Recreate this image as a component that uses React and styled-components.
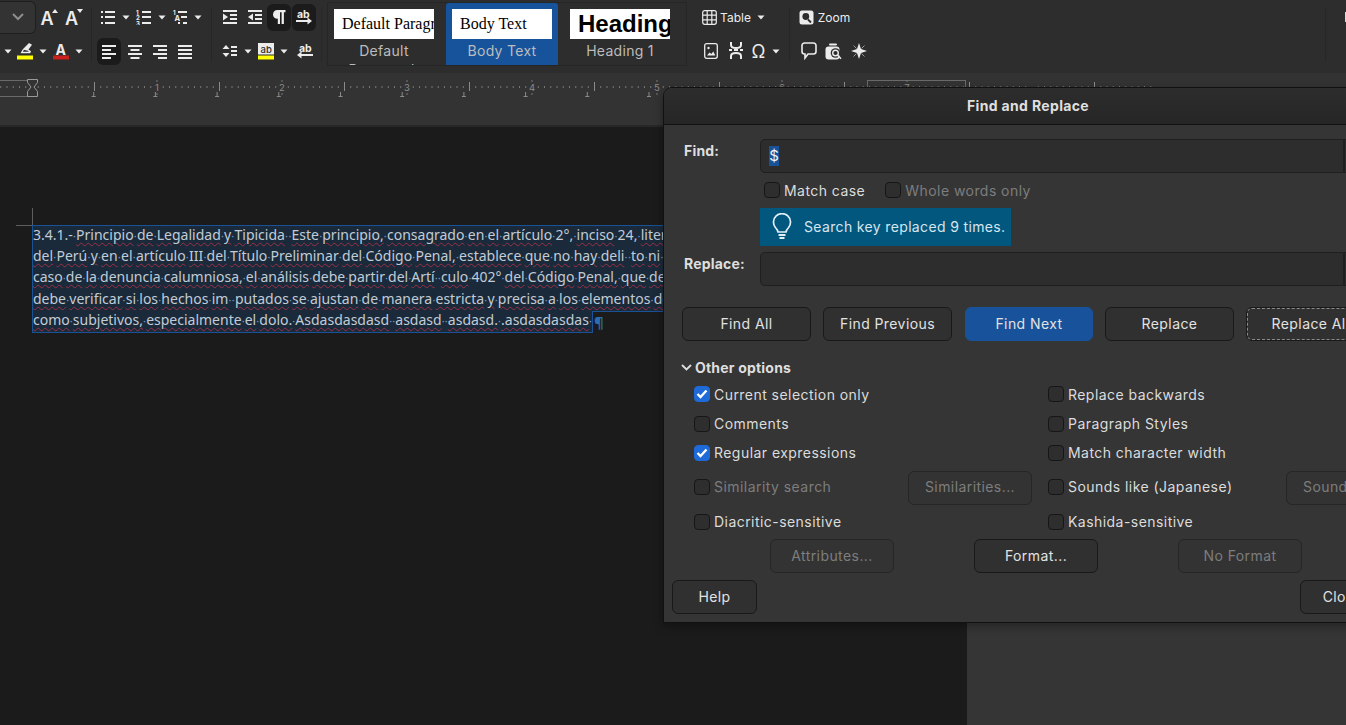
import React from 'react';
import styled, { createGlobalStyle } from 'styled-components';

const Global = createGlobalStyle`
  html, body { margin: 0; padding: 0; background: #1b1b1b; overflow: hidden; }
  * { box-sizing: border-box; }
`;

const Screen = styled.div`
  position: relative; width: 1346px; height: 725px; overflow: hidden;
  display: flex; flex-direction: column;
  font-family: Inter, "Liberation Sans", sans-serif; font-size: 14px; color: #e4e4e4;
`;

/* ---------- toolbar ---------- */
const Toolbar = styled.div`
  flex: 0 0 73px; display: flex; background: #2d2d2d; padding-bottom: 5px;
`;
const Section = styled.div`
  flex: 0 0 ${p => p.$w}px; display: flex; flex-direction: column; margin-left: ${p => p.$ml || 0}px;
  position: relative; height: 68px;
  &::after { content: ""; position: absolute; right: 0; top: 8px; bottom: 6px; width: 1px; background: #272727; }
`;
const ToolRow = styled.div`
  flex: 0 0 34px; display: flex; align-items: center; padding-left: ${p => p.$pad || 0}px;
`;
const Tool = styled.div`
  flex: 0 0 ${p => (p.$on ? p.$w - 1 : p.$w)}px; height: 27px; display: flex; align-items: center; justify-content: center;
  margin-right: ${p => (p.$on ? 1 : 0)}px;
  border-radius: 6px; color: #ececec; font-size: 12px;
  background: ${p => (p.$on ? '#1b1b1b' : 'transparent')};
`;
const Combo = styled.div`
  flex: 0 0 36px; height: 33px; display: flex; align-items: center; justify-content: center;
  background: #333; border: 1px solid #1f1f1f; border-left: none; border-radius: 0 6px 6px 0; color: #8d8d8d;
`;
const Glyph = styled.svg`
  display: block; fill: currentColor; flex: none;
  text { font-family: Inter, sans-serif; }
`;
const Arrow = () => (
  <Glyph width="8" height="5" viewBox="0 0 8 5"><path d="M0.5 0.5h7L4 4.5z" /></Glyph>
);
const Ico = ({ s = 16, w, h, children }) => (
  <Glyph width={w || s} height={h || s} viewBox={`0 0 ${w || s} ${h || s}`}>{children}</Glyph>
);
const R = ({ x, y, w, h = 2, c }) => <rect x={x} y={y} width={w} height={h} fill={c} />;

const icons = {
  grow: (
    <Ico w={22} h={22}><text x="2.500" y="19" fontSize="18" fontWeight="600">A</text><path d="M14 7l3-4 3 4z" /></Ico>
  ),
  shrink: (
    <Ico w={22} h={22}><text x="2" y="19" fontSize="18" fontWeight="600">A</text><path d="M14 3h6l-3 4z" /></Ico>
  ),
  bullets: (
    <Ico><R x={1} y={2} w={2} /><R x={5} y={2} w={10} /><R x={1} y={7} w={2} /><R x={5} y={7} w={10} /><R x={1} y={13} w={2} /><R x={5} y={13} w={10} /></Ico>
  ),
  numbers: (
    <Ico>
      <text x="0" y="5.500" fontSize="6" fontWeight="700">1</text><text x="0" y="11" fontSize="6" fontWeight="700">2</text><text x="0" y="16.500" fontSize="6" fontWeight="700">3</text>
      <R x={6} y={2} w={9} /><R x={6} y={7} w={9} /><R x={6} y={13} w={9} />
    </Ico>
  ),
  outline: (
    <Ico>
      <text x="1" y="5.500" fontSize="6" fontWeight="700">1</text><text x="2.500" y="11.500" fontSize="7.500" fontWeight="700">A</text>
      <R x={6} y={2} w={9} /><R x={9} y={7} w={6} /><R x={6} y={13} w={2} /><R x={11} y={13} w={4} />
    </Ico>
  ),
  indent: (
    <Ico><R x={1} y={1} w={14} /><R x={8} y={5} w={7} /><R x={8} y={9} w={7} /><R x={1} y={13} w={14} /><path d="M1 4.500l5 3.500-5 3.500z" /></Ico>
  ),
  outdent: (
    <Ico><R x={1} y={1} w={14} /><R x={8} y={5} w={7} /><R x={8} y={9} w={7} /><R x={1} y={13} w={14} /><path d="M6 4.500L1 8l5 3.500z" /></Ico>
  ),
  pilcrow: (
    <Ico><path d="M6.500 1h8v2.200h-1.600V15h-2.300V3.200H9V15H6.800V9.800C3.600 9.800 2 8 2 5.500S3.800 1 6.500 1z" /></Ico>
  ),
  abRight: (
    <Ico>
      <text x="1" y="8.600" fontSize="10.500" fontWeight="700">ab</text>
      <R x={0} y={11} w={14} /><path d="M11.500 8.500L16 12l-4.500 3.500z" />
    </Ico>
  ),
  abLeft: (
    <Ico>
      <text x="2" y="8.600" fontSize="10.500" fontWeight="700">ab</text>
      <R x={2} y={11} w={14} /><path d="M4.500 8.500L0 12l4.500 3.500z" />
    </Ico>
  ),
  marker: (
    <Glyph width="16" height="17" viewBox="0 0 16 17">
      <path d="M12 0l3 1.800-3.500 4.700L14 8.300l-.8 2H3.500l2.300-4L12 0zM6.900 6.800L5.900 8.700h5.300l.5-.6z" />
      <R x={0} y={12.500} w={16} h={4} c="#ffff00" />
    </Glyph>
  ),
  fontColor: (
    <Glyph width="16" height="17" viewBox="0 0 16 17">
      <text x="2.500" y="11.500" fontSize="14" fontWeight="700">A</text>
      <R x={0} y={12.500} w={16} h={4} c="#c9211e" />
    </Glyph>
  ),
  left: <Ico><R x={1} y={2} w={14} /><R x={1} y={6} w={9} /><R x={1} y={10} w={14} /><R x={1} y={14} w={9} /></Ico>,
  center: <Ico><R x={1} y={2} w={14} /><R x={3.500} y={6} w={9} /><R x={1} y={10} w={14} /><R x={3.500} y={14} w={9} /></Ico>,
  right: <Ico><R x={1} y={2} w={14} /><R x={6} y={6} w={9} /><R x={1} y={10} w={14} /><R x={6} y={14} w={9} /></Ico>,
  justify: <Ico><R x={1} y={2} w={14} /><R x={1} y={6} w={14} /><R x={1} y={10} w={14} /><R x={1} y={14} w={14} /></Ico>,
  spacing: (
    <Ico>
      <path d="M4 2l3.500 4h-7zM4 14L.5 10h7z" />
      <R x={9} y={3} w={6} /><R x={9} y={7} w={6} /><R x={9} y={11} w={6} />
    </Ico>
  ),
  abBg: (
    <Glyph width="16" height="17" viewBox="0 0 16 17">
      <rect x="0" y="0" width="16" height="11.500" fill="#ececec" />
      <text x="2.500" y="9.500" fontSize="9.500" fontWeight="500" fill="#2d2d2d">ab</text>
      <R x={0} y={12.500} w={16} h={4} c="#ffff00" />
    </Glyph>
  ),
  table: (
    <Glyph width="15" height="15" viewBox="0 0 15 15" stroke="currentColor" strokeWidth="1.200" style={{ fill: 'none' }}>
      <rect x="0.700" y="0.700" width="13.600" height="13.600" rx="2" />
      <path d="M5.200 1v13M9.800 1v13M1 5.200h13M1 9.800h13" />
    </Glyph>
  ),
  zoom: (
    <Ico s={15}>
      <rect x="0.500" y="0.500" width="14" height="14" rx="2.500" />
      <circle cx="6.800" cy="6.500" r="3.400" fill="#2d2d2d" />
      <path d="M9 9.500l3 3" stroke="#2d2d2d" strokeWidth="1.800" />
    </Ico>
  ),
  image: (
    <Glyph width="14" height="16" viewBox="0 0 14 16" style={{ fill: 'none' }} stroke="currentColor" strokeWidth="1.300">
      <rect x="0.700" y="0.700" width="12.600" height="14.600" rx="2" />
      <circle cx="4.500" cy="5" r="1.200" fill="currentColor" stroke="none" />
      <path d="M3 12.500l2.500-3 1.800 1.500 2-2.500 2 4z" fill="currentColor" stroke="none" />
    </Glyph>
  ),
  special: (
    <Glyph width="16" height="18" viewBox="0 0 16 18" style={{ fill: 'none' }} stroke="currentColor" strokeWidth="2">
      <path d="M3 0v3c0 2 2 3 5 3s5-1 5-3V0M1 8h3M6 8h4M12 8h3M3 17v-3c0-2 2-3 5-3s5 1 5 3v3" />
    </Glyph>
  ),
  omega: (
    <Ico w={16} h={20}><text x="0.500" y="16.500" fontSize="18" fontWeight="400">Ω</text></Ico>
  ),
  comment: (
    <Glyph width="16" height="18" viewBox="0 0 16 18" style={{ fill: 'none' }} stroke="currentColor" strokeWidth="1.600">
      <path d="M3.500 1h9A2.500 2.500 0 0 1 15 3.500v6a2.500 2.500 0 0 1-2.500 2.500H7l-3 4v-4h-.5A2.500 2.500 0 0 1 1 9.500v-6A2.500 2.500 0 0 1 3.500 1z" />
    </Glyph>
  ),
  findComment: (
    <Ico w={17} h={17}>
      <rect x="4" y="0.500" width="8" height="2" rx="1" />
      <rect x="0.500" y="3.500" width="14" height="13" rx="3" />
      <circle cx="10.500" cy="10" r="4.800" fill="#2d2d2d" />
      <circle cx="10.500" cy="10" r="2.800" fill="none" stroke="currentColor" strokeWidth="1.400" />
      <path d="M12.500 12l3.500 3.800" stroke="currentColor" strokeWidth="1.600" />
    </Ico>
  ),
  sparkle: (
    <Ico>
      <path d="M8 0l2 6 6 2-6 2-2 6-2-6-6-2 6-2z" />
      <path d="M2.500 2.500l3 3M13.500 2.500l-3 3M2.500 13.500l3-3M13.500 13.500l-3-3" stroke="#9a9a9a" strokeWidth="1" />
    </Ico>
  )
};

const CharIcon = ({ name }) => icons[name];

const Gallery = styled.div`
  flex: 0 0 360px; height: 64px; margin: 2px 0 0 5px; display: flex; gap: 6px; border: 1px solid #262626;
  overflow: hidden;
`;
const StyleItem = styled.div`
  flex: 0 0 112px; height: 62px; padding: 6px 6px 0; overflow: hidden; text-align: center;
  background: ${p => (p.$on ? '#17539b' : 'transparent')}; border-radius: 3px 3px 0 0;
`;
const Preview = styled.div`
  height: 30px; background: #fff; color: #000; overflow: hidden; white-space: nowrap; text-align: left; padding-left: 8px;
  font-family: ${p => (p.$head ? '"Liberation Sans"' : '"Liberation Serif"')}, serif;
  font-size: ${p => (p.$head ? 24 : 16)}px; font-weight: ${p => (p.$head ? 700 : 400)}; line-height: 30px;
`;
const StyleLabel = styled.div`
  margin-top: 2px; font-size: 14px; line-height: 19px; color: #bcbcbc; letter-spacing: .3px;
`;
const TinyMark = styled.div`
  width: 1px; height: 10px; background: #d8d8d8; margin: 12px 0 0 19px;
`;

/* ---------- ruler ---------- */
const RulerBar = styled.div`
  flex: 0 0 54px; background: #333; border-bottom: 2px solid #282828;
`;
const RulerSvg = styled.svg`
  display: block;
  text { font-family: Inter, sans-serif; font-size: 9.500px; fill: #8c8c8c; }
`;
const Ruler = () => {
  const ticks = [];
  for (let i = -5; i < 180; i++) {
    const x = 32 + i * 6.25;
    const k = ((i % 20) + 20) % 20;
    if (k === 0) continue;
    const long = k === 10;
    ticks.push(<line key={i} x1={x} x2={x} y1={long ? 9 : 13} y2={long ? 18 : 15} stroke={long ? '#8a8a8a' : '#777'} />);
  }
  const tabs = [];
  for (let i = 1; i < 15; i++) {
    const x = 32 + i * 61.7;
    tabs.push(<path key={i} d={`M${x - 2} 23.500h4M${x} 19v4`} stroke="#8a8a8a" fill="none" />);
  }
  const nums = [1, 2, 3, 4, 5, 6, 7].map(n => (
    <g key={n}>
      <text x={32 + n * 125} y={17.500} textAnchor="middle">{n}</text>
      <line x1={32 + n * 125} x2={32 + n * 125} y1={7} y2={9} stroke="#777" />
      <line x1={32 + n * 125} x2={32 + n * 125} y1={20} y2={22} stroke="#777" />
    </g>
  ));
  return (
    <RulerSvg width="1346" height="52" viewBox="0 0 1346 52">
      <rect x="-1" y="7.500" width="33" height="16" fill="none" stroke="#6a6a6a" />
      <rect x="867.500" y="7.500" width="98" height="16" fill="none" stroke="#6a6a6a" />
      {ticks}{tabs}{nums}
      <path d="M27.500 6.500h10v3l-3.500 4.500 3.500 4.500v5h-10v-5l3.500-4.500-3.500-4.500z" fill="#333" stroke="#9a9a9a" />
    </RulerSvg>
  );
};

/* ---------- document ---------- */
const Workspace = styled.div`
  flex: 1; display: flex; min-height: 0;
`;
const Canvas = styled.div`
  flex: 0 0 967px; background: #1b1b1b; padding: 81px 0 0 16px; overflow: hidden; position: relative;
`;
const Side = styled.div`
  flex: 1; background: #353535;
`;
const CropMark = styled.div`
  width: 17px; height: 18px; border-right: 1px solid #5e5e5e; border-bottom: 1px solid #5e5e5e;
`;
const TextArea = styled.div`
  margin-left: 16px; font-family: "Noto Sans", sans-serif; font-size: 14px; color: #c2ccd6; margin-top: -1px;
`;
const SelBlock = styled.div`
  background: #1b2a3a; border: 1px solid #1a5296; width: 940px;
`;
const SelLast = styled.div`
  display: flex; align-items: center; margin-top: -1px;
`;
const SelTail = styled.div`
  background: #1b2a3a; border: 1px solid #1a5296; border-top: none; position: relative; margin-right: -1px;
  &::before { content: ""; position: absolute; left: 0; right: 0; top: -1px; height: 1px; background: #1b2a3a; }
`;
const Pilcrow = styled.span`
  color: #2a6db3; margin-left: 2px; font-weight: 700; font-size: 15px; line-height: 20px;
`;
const Line = styled.div`
  height: ${p => p.$h || 21.2}px; line-height: 18px; white-space: nowrap;
`;
const Word = styled.span`
  text-decoration: ${p => (p.$plain ? 'none' : 'underline wavy #9c2f45')};
  text-decoration-thickness: 1px; text-underline-offset: 2px;
`;
const Dot = styled.span`
  display: inline-block; width: ${p => p.$w}px; text-align: center; color: #6a9ccc; font-size: 11px;
`;

const TextLine = ({ text, sp = 3.1, h }) => {
  const parts = text.split(' ');
  return (
    <Line $h={h}>
      {parts.map((w, i) => (
        <React.Fragment key={i}>
          {i > 0 && <Dot $w={sp}>·</Dot>}
          {w && <Word $plain={/^[\d.°,-]+$/.test(w)}>{w}</Word>}
        </React.Fragment>
      ))}
    </Line>
  );
};

/* ---------- dialog ---------- */
const Dialog = styled.div`
  position: absolute; left: 663px; top: 87px; width: 730px; height: 536px;
  background: #353535; border: 1px solid #111; border-radius: 9px 9px 0 0;
  box-shadow: 0 3px 10px rgba(0,0,0,.35); overflow: hidden; display: flex; flex-direction: column;
`;
const TitleBar = styled.div`
  flex: 0 0 37px; background: linear-gradient(#2d2d2d, #262626); border-bottom: 1px solid #111;
  display: flex; align-items: center; justify-content: center; padding-bottom: 2px;
  font-weight: 700; font-size: 14px; color: #dfdfdf; letter-spacing: .35px;
`;
const Body = styled.div`
  flex: 1; display: flex; flex-direction: column; padding-top: 14px;
`;
const FieldRow = styled.div`
  display: flex; margin-top: ${p => p.$mt || 0}px; padding-left: 20px; height: 34px;
`;
const FieldLabel = styled.div`
  flex: 0 0 76px; font-weight: 700; color: #dedede; line-height: 24px; letter-spacing: .2px;
`;
const Field = styled.div`
  flex: 0 0 584px; height: 34px; background: #2d2d2d; border: 1px solid #1f1f1f; border-radius: 5px 0 0 5px;
  padding: 6px 0 0 8px; line-height: 20px;
`;
const FieldEnd = styled.div`
  flex: 0 0 60px; height: 34px; background: #2d2d2d; border: 1px solid #1f1f1f;
`;
const Selected = styled.span`
  display: inline-block; background: #17539b; color: #f2f2f2; width: 10px; text-align: center; font-size: 15px; height: 20px;
`;
const InlineChecks = styled.div`
  display: flex; height: 20px; margin: 8px 0 0 100px; align-items: center;
`;
const Check = styled.label`
  display: flex; align-items: center; gap: 4px; color: ${p => (p.$off ? '#7d7d7d' : '#dcdcdc')}; letter-spacing: .45px;
  margin-right: ${p => p.$mr || 0}px; white-space: nowrap;
`;
const CheckText = styled.span`
  padding-bottom: 2px;
`;
const Box = styled.span`
  flex: none; width: 16px; height: 16px; border-radius: 4px; display: flex; align-items: center; justify-content: center;
  margin-bottom: 2px;
  background: ${p => (p.$on ? '#1d6ad8' : '#2e2e2e')}; border: 1px solid ${p => (p.$on ? '#1d6ad8' : '#161616')};
`;
const CheckMark = () => (
  <svg width="12" height="10" viewBox="0 0 12 10"><path d="M1.500 5l3 3 6-6.500" fill="none" stroke="#fff" strokeWidth="2.400" /></svg>
);
const CheckItem = ({ on, off, children, mr }) => (
  <Check $off={off} $mr={mr}><Box $on={on}>{on && <CheckMark />}</Box><CheckText>{children}</CheckText></Check>
);
const InfoBar = styled.div`
  width: 251px; height: 38px; margin: 7px 0 0 96px; background: #02577f; display: flex; align-items: center;
  padding: 0 0 2px 11px; gap: 11px; color: #d5e6ef; letter-spacing: .35px; white-space: nowrap;
`;
const Bulb = () => (
  <svg width="22" height="26" viewBox="0 0 22 26" fill="none" stroke="#e2eff6" strokeWidth="1.700" style={{ flex: 'none' }}>
    <path d="M7 19c-.3-2-1.200-3-2.600-4.500A8.500 8.500 0 1 1 17.600 14.500C16.200 16 15.300 17 15 19z" />
    <path d="M7.500 22h7M8.500 25h5" strokeWidth="2" />
  </svg>
);
const ButtonRow = styled.div`
  display: flex; gap: 12px; margin-top: ${p => p.$mt || 0}px; padding-left: ${p => p.$pad || 0}px;
`;
const Btn = styled.div`
  flex: 0 0 ${p => (p.$primary ? 128 : p.$w || 129)}px; width: ${p => p.$w || 129}px; height: 34px; border-radius: 6px;
  display: flex; align-items: center; justify-content: ${p => (p.$start ? 'flex-start' : 'center')};
  padding: 0 0 2px ${p => (p.$start ? 16 : 0)}px; margin-left: ${p => (p.$primary ? 1 : 0)}px;
  background: ${p => (p.$primary ? '#17529a' : p.$off ? '#333' : '#303030')};
  border: 1px solid ${p => (p.$primary ? '#17529a' : p.$off ? '#262626' : '#191919')};
  color: ${p => (p.$off ? '#7d7d7d' : '#e2e2e2')}; letter-spacing: .42px; white-space: nowrap;
  ${p => p.$focus && 'outline: 1px dashed #8b8b8b; outline-offset: -2px;'}
`;
const Expander = styled.div`
  height: 20px; margin: 17px 0 0 17px; display: flex; align-items: center; gap: 3px; font-weight: 700; color: #dedede; letter-spacing: .2px;
  padding-bottom: 2px;
`;
const OptionGrid = styled.div`
  display: grid; margin: 2px 0 0 30px;
  grid-template-columns: 214px 140px 238px 124px;
  grid-template-rows: 30px 29px 29px 39px 31px; align-items: center;
`;
const Empty = styled.span``;
const ActionRow = styled.div`
  display: flex; margin: 1px 0 0 106px; gap: 80px;
`;
const FootRow = styled.div`
  display: flex; justify-content: space-between; margin-top: 7px; padding: 0 7px 0 8px;
`;

export default function App() {
  return (
    <>
      <Global />
      <Screen>
        <Toolbar>
          <Section $w={92}>
            <ToolRow>
              <Combo>
                <svg width="12" height="8" viewBox="0 0 12 8" fill="none" stroke="currentColor" strokeWidth="2"><path d="M1 1l5 5 5-5" /></svg>
              </Combo>
              <Tool $w={25}><CharIcon name="grow" /></Tool>
              <Tool $w={26}><CharIcon name="shrink" /></Tool>
            </ToolRow>
            <ToolRow>
              <Tool $w={16}><Arrow /></Tool>
              <Tool $w={18}><CharIcon name="marker" /></Tool>
              <Tool $w={18}><Arrow /></Tool>
              <Tool $w={18}><CharIcon name="fontColor" /></Tool>
              <Tool $w={18}><Arrow /></Tool>
            </ToolRow>
          </Section>
          <Section $w={120}>
            <ToolRow $pad={7}>
              <Tool $w={18}><CharIcon name="bullets" /></Tool>
              <Tool $w={18}><Arrow /></Tool>
              <Tool $w={18}><CharIcon name="numbers" /></Tool>
              <Tool $w={18}><Arrow /></Tool>
              <Tool $w={18}><CharIcon name="outline" /></Tool>
              <Tool $w={18}><Arrow /></Tool>
            </ToolRow>
            <ToolRow $pad={5}>
              <Tool $w={25} $on><CharIcon name="left" /></Tool>
              <Tool $w={25}><CharIcon name="center" /></Tool>
              <Tool $w={25}><CharIcon name="right" /></Tool>
              <Tool $w={25}><CharIcon name="justify" /></Tool>
            </ToolRow>
          </Section>
          <Section $w={110}>
            <ToolRow $pad={5}>
              <Tool $w={25}><CharIcon name="indent" /></Tool>
              <Tool $w={25}><CharIcon name="outdent" /></Tool>
              <Tool $w={25} $on><CharIcon name="pilcrow" /></Tool>
              <Tool $w={25} $on><CharIcon name="abRight" /></Tool>
            </ToolRow>
            <ToolRow $pad={9}>
              <Tool $w={18}><CharIcon name="spacing" /></Tool>
              <Tool $w={18}><Arrow /></Tool>
              <Tool $w={18}><CharIcon name="abBg" /></Tool>
              <Tool $w={18}><Arrow /></Tool>
              <Tool $w={24}><CharIcon name="abLeft" /></Tool>
            </ToolRow>
          </Section>
          <Gallery>
            <StyleItem>
              <Preview>Default Paragraph</Preview>
              <StyleLabel>Default Paragraph</StyleLabel>
            </StyleItem>
            <StyleItem $on>
              <Preview>Body Text</Preview>
              <StyleLabel>Body Text</StyleLabel>
            </StyleItem>
            <StyleItem>
              <Preview $head>Heading 1</Preview>
              <StyleLabel>Heading 1</StyleLabel>
            </StyleItem>
          </Gallery>
          <Section $w={98} $ml={5}>
            <ToolRow $pad={10}>
              <Tool $w={15}><CharIcon name="table" /></Tool>
              <Tool $w={37}>Table</Tool>
              <Tool $w={14}><Arrow /></Tool>
            </ToolRow>
            <ToolRow $pad={7}>
              <Tool $w={24}><CharIcon name="image" /></Tool>
              <Tool $w={26}><CharIcon name="special" /></Tool>
              <Tool $w={20}><CharIcon name="omega" /></Tool>
              <Tool $w={14}><Arrow /></Tool>
            </ToolRow>
          </Section>
          <Section $w={536}>
            <ToolRow $pad={9}>
              <Tool $w={15}><CharIcon name="zoom" /></Tool>
              <Tool $w={40}>Zoom</Tool>
            </ToolRow>
            <ToolRow $pad={6}>
              <Tool $w={25}><CharIcon name="comment" /></Tool>
              <Tool $w={25}><CharIcon name="findComment" /></Tool>
              <Tool $w={25}><CharIcon name="sparkle" /></Tool>
            </ToolRow>
          </Section>
          <TinyMark />
        </Toolbar>
        <RulerBar><Ruler /></RulerBar>
        <Workspace>
          <Canvas>
            <CropMark />
            <TextArea>
              <SelBlock>
                <TextLine sp={3.3} text="3.4.1.- Principio de Legalidad y Tipicida  Este principio, consagrado en el artículo 2°, inciso 24, literal d)" />
                <TextLine sp={3.35} text="del Perú y en el artículo III del Título Preliminar del Código Penal, establece que no hay deli  to ni pena" />
                <TextLine text="caso de la denuncia calumniosa, el análisis debe partir del Artí  culo 402° del Código Penal, que define" />
                <TextLine sp={3.25} text="debe verificar si los hechos im  putados se ajustan de manera estricta y precisa a los elementos del tipo" />
              </SelBlock>
              <SelLast>
                <SelTail>
                  <TextLine text="como subjetivos, especialmente el dolo. Asdasdasdasd  asdasd  asdasd. .asdasdasdas " h={21} />
                </SelTail>
                <Pilcrow>¶</Pilcrow>
              </SelLast>
            </TextArea>
          </Canvas>
          <Side />
        </Workspace>

        <Dialog>
          <TitleBar>Find and Replace</TitleBar>
          <Body>
            <FieldRow>
              <FieldLabel>Find:</FieldLabel>
              <Field><Selected>$</Selected></Field>
              <FieldEnd />
            </FieldRow>
            <InlineChecks>
              <CheckItem mr={20}>Match case</CheckItem>
              <CheckItem off>Whole words only</CheckItem>
            </InlineChecks>
            <InfoBar><Bulb />Search key replaced 9 times.</InfoBar>
            <FieldRow $mt={6}>
              <FieldLabel>Replace:</FieldLabel>
              <Field />
              <FieldEnd />
            </FieldRow>
            <ButtonRow $mt={21} $pad={18}>
              <Btn>Find All</Btn>
              <Btn>Find Previous</Btn>
              <Btn $primary>Find Next</Btn>
              <Btn>Replace</Btn>
              <Btn $focus>Replace All</Btn>
            </ButtonRow>
            <Expander>
              <svg width="11" height="7" viewBox="0 0 11 7" fill="none" stroke="#dedede" strokeWidth="1.800"><path d="M1 1l4.500 4.500L10 1" /></svg>
              Other options
            </Expander>
            <OptionGrid>
              <CheckItem on>Current selection only</CheckItem><Empty />
              <CheckItem>Replace backwards</CheckItem><Empty />
              <CheckItem>Comments</CheckItem><Empty />
              <CheckItem>Paragraph Styles</CheckItem><Empty />
              <CheckItem on>Regular expressions</CheckItem><Empty />
              <CheckItem>Match character width</CheckItem><Empty />
              <CheckItem off>Similarity search</CheckItem>
              <Btn $off $w={124}>Similarities...</Btn>
              <CheckItem>Sounds like (Japanese)</CheckItem>
              <Btn $off $start $w={124}>Sounds...</Btn>
              <CheckItem>Diacritic-sensitive</CheckItem><Empty />
              <CheckItem>Kashida-sensitive</CheckItem><Empty />
            </OptionGrid>
            <ActionRow>
              <Btn $off $w={124}>Attributes...</Btn>
              <Btn $w={124}>Format...</Btn>
              <Btn $off $w={124}>No Format</Btn>
            </ActionRow>
            <FootRow>
              <Btn $w={85}>Help</Btn>
              <Btn $w={85}>Close</Btn>
            </FootRow>
          </Body>
        </Dialog>
      </Screen>
    </>
  );
}
